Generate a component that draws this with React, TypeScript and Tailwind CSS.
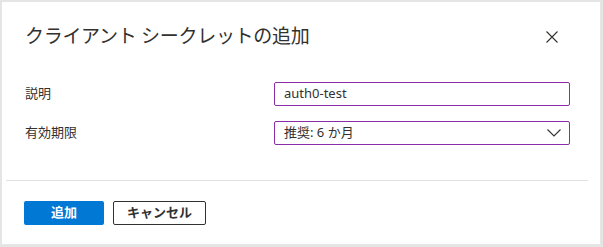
import React from 'react';

const font = { fontFamily: '"Noto Sans", "Noto Sans CJK JP", sans-serif' };

const CloseIcon = () => (
    <svg width="12" height="12" viewBox="0 0 12 12" fill="none" stroke="#323130" strokeWidth="1.1">
        <path d="M0.5 0.5 L11.5 11.5 M11.5 0.5 L0.5 11.5" />
    </svg>
);

const Chevron = () => (
    <svg width="14" height="8" viewBox="0 0 14 8" fill="none" stroke="#323130" strokeWidth="1.1">
        <path d="M0.5 0.5 L7 7 L13.5 0.5" />
    </svg>
);

export default function App() {
    return (
        <div className="w-[603px] h-[247px] bg-[#e5e5e5] pt-[2px] pl-[2px] text-[#323130]" style={font}>
            <div className="w-[598px] h-[242px] bg-white flex flex-col">
                {/* header */}
                <div className="h-[80px] flex items-start justify-between pl-[23px] pr-[42px] pt-[19px]">
                    <h1 className="text-[19px] leading-[30px] font-normal tracking-[-0.3px]">クライアント シークレットの追加</h1>
                    <button className="mt-[10px] w-[12px] h-[12px] flex items-center justify-center">
                        <CloseIcon />
                    </button>
                </div>

                {/* form */}
                <div className="grid grid-cols-[249px_296px] gap-y-[15px] pl-[23px] text-[13px]">
                    <label className="flex items-center h-[24px]">説明</label>
                    <div className="h-[24px] border border-[#8a2da8] rounded-[2px] px-[9px] flex items-center">
                        auth0-test
                    </div>
                    <label className="flex items-center h-[24px]">有効期限</label>
                    <div className="h-[24px] border border-[#8a2da8] rounded-[2px] pl-[9px] pr-[8px] flex items-center justify-between">
                        <span>推奨: 6 か月</span>
                        <Chevron />
                    </div>
                </div>

                {/* divider */}
                <div className="mt-[35px] ml-[4px] w-[582px] h-px bg-[#e1e1e1]" />

                {/* footer */}
                <div className="mt-[20px] pl-[22px] flex gap-[9px] text-[13px] font-semibold">
                    <button className="w-[80px] h-[24px] bg-[#0078d4] text-white rounded-[2px] flex items-center justify-center">
                        追加
                    </button>
                    <button className="w-[93px] h-[24px] border border-[#323130] rounded-[2px] flex items-center justify-center">
                        キャンセル
                    </button>
                </div>
            </div>
        </div>
    );
}
